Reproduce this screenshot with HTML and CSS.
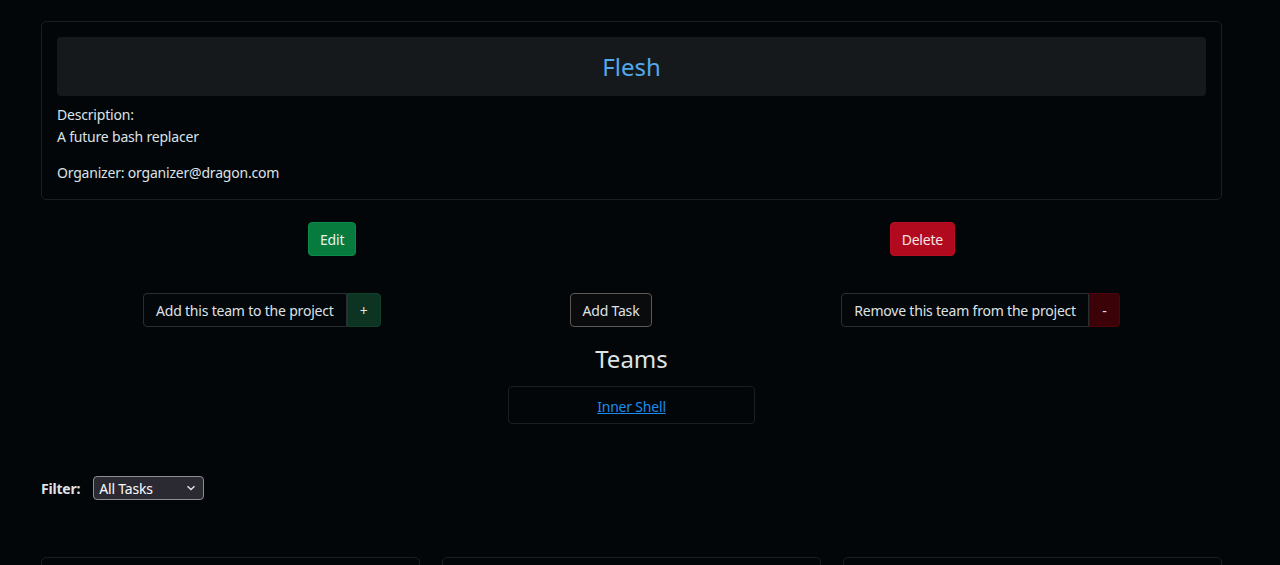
FILE: index.html
```html
<!DOCTYPE html>
<html lang="en">
<head>
<meta charset="utf-8">
<title>Flesh</title>
<link rel="stylesheet" href="styles.css">
</head>
<body>
<main class="page">
  <section class="card project">
    <div class="title-box"><h1 class="title">Flesh</h1></div>
    <p class="desc">Description:<br>A future bash replacer</p>
    <p class="organizer">Organizer: organizer@dragon.com</p>
  </section>

  <div class="row-actions">
    <button class="btn btn-edit">Edit</button>
    <button class="btn btn-delete">Delete</button>
  </div>

  <div class="row-teams">
    <div class="group">
      <button class="btn btn-outline">Add this team to the project</button>
      <button class="btn btn-plus">+</button>
    </div>
    <button class="btn btn-task">Add Task</button>
    <div class="group">
      <button class="btn btn-outline">Remove this team from the project</button>
      <button class="btn btn-minus">-</button>
    </div>
  </div>

  <h2 class="teams-title">Teams</h2>
  <div class="team-box"><a href="#" class="team-link">Inner Shell</a></div>

  <div class="filter">
    <label class="filter-label" for="f">Filter:</label>
    <div class="select">
      <span>All Tasks</span>
      <svg width="10" height="6" viewBox="0 0 10 6"><path d="M1.5 1.2 5 4.6 8.5 1.2" fill="none" stroke="#e6e6e6" stroke-width="1.4"/></svg>
    </div>
  </div>

  <div class="task-cards">
    <div class="card task"></div>
    <div class="card task"></div>
    <div class="card task"></div>
  </div>
</main>
</body>
</html>
```

FILE: styles.css
```css
html, body {
  margin: 0;
  background: #030608;
  color: #dee2e6;
  font-family: "Noto Sans", "Open Sans", sans-serif;
  font-size: 14px;
  letter-spacing: -0.2px;
}
.page {
  width: 1181px;
  margin-left: 41px;
  padding-top: 21px;
}
.card {
  border: 1px solid #1b1e21;
  border-radius: 5px;
  background: #030608;
}
.project {
  padding: 15px;
}
.title-box {
  background: #16191b;
  border-radius: 4px;
  height: 59px;
  display: flex;
  align-items: center;
  justify-content: center;
  margin-bottom: 8px;
}
.title {
  margin: 0;
  font-weight: 400;
  font-size: 24px;
  letter-spacing: 0;
  color: #53a8ea;
}
.desc {
  margin: 0 0 14px;
  line-height: 22px;
}
.organizer {
  margin: 0;
  line-height: 22px;
}
.btn {
  font-family: inherit;
  font-size: 14px;
  letter-spacing: -0.2px;
  color: #dee2e6;
  border: 1px solid transparent;
  border-radius: 4px;
  height: 34px;
  padding: 0 12px;
  cursor: pointer;
  background: transparent;
}
.row-actions {
  margin-top: 22px;
  padding: 0 267px;
  display: flex;
  justify-content: space-between;
}
.btn-edit {
  background: #077a3e;
  border-color: #0b8a48;
  color: #e8f2ec;
  padding: 0 11px;
}
.btn-delete {
  background: #b10a1f;
  border-color: #b80d22;
  color: #f5e3e5;
  padding: 0 11px;
}
.row-teams {
  margin-top: 37px;
  padding: 0 102px;
  display: flex;
  justify-content: space-between;
}
.group {
  display: flex;
}
.btn-outline {
  background: #040709;
  border-color: #2a2e31;
  border-radius: 4px 0 0 4px;
}
.btn-plus {
  background: #0d3323;
  border-color: #11402b;
  border-radius: 0 4px 4px 0;
  width: 34px;
  padding: 0;
}
.btn-minus {
  background: #3b0207;
  border-color: #4e050c;
  border-radius: 0 4px 4px 0;
  width: 31px;
  padding: 0;
}
.btn-task {
  background: #090b0d;
  border-color: #5d5853;
}
.teams-title {
  margin: 17px 0 0;
  font-weight: 400;
  font-size: 24px;
  letter-spacing: 0;
  line-height: 29px;
  text-align: center;
}
.team-box {
  width: 245px;
  height: 36px;
  margin: 13px auto 0;
  border: 1px solid #1b1e21;
  border-radius: 4px;
  display: flex;
  align-items: center;
  justify-content: center;
}
.team-link {
  color: #1c8cf0;
  text-decoration: underline;
  padding-top: 2px;
}
.filter {
  margin-top: 52px;
  display: flex;
  align-items: center;
  gap: 13px;
}
.filter-label {
  font-weight: 700;
}
.select {
  height: 22px;
  box-sizing: content-box;
  border: 1px solid #8e8d96;
  border-radius: 4px;
  background: #2b2a33;
  color: #fbfbfe;
  display: flex;
  align-items: center;
  justify-content: space-between;
  padding: 0 0 0 5px;
  width: 104px;
}
.select svg {
  margin-right: 7px;
}
.task-cards {
  margin-top: 57px;
  display: grid;
  grid-template-columns: repeat(3, 1fr);
  gap: 22px;
}
.task {
  height: 60px;
}
```
